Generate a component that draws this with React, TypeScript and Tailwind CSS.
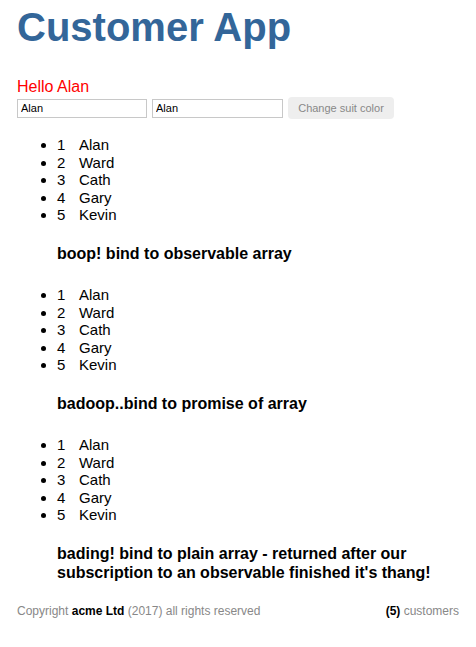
import React from "react";

const customers = [
  { id: 1, name: "Alan" },
  { id: 2, name: "Ward" },
  { id: 3, name: "Cath" },
  { id: 4, name: "Gary" },
  { id: 5, name: "Kevin" },
];

function CustomerList() {
  return (
    <ul className="list-disc pl-[40px] text-[15px] leading-[17.5px] text-black">
      {customers.map((c) => (
        <li key={c.id}>
          <span className="inline-block w-[22px]">{c.id}</span>
          {c.name}
        </li>
      ))}
    </ul>
  );
}

function Heading({ children }: { children: React.ReactNode }) {
  return (
    <h4 className="ml-[40px] mt-[21.5px] mb-[22.6px] text-[16px] leading-[18.4px] font-bold text-black">
      {children}
    </h4>
  );
}

export default function App() {
  return (
    <div
      className="min-h-[647px] bg-white px-[17px] text-black"
      style={{ fontFamily: '"Liberation Sans", Arial, sans-serif' }}
    >
      <h1 className="pt-[4px] text-[40px] leading-[46px] font-bold text-[#336699]">
        Customer App
      </h1>
      <div className="mt-[28px] text-[16px] leading-[18.4px] text-[#ff0000]">Hello Alan</div>
      <div className="flex items-center h-[22px] mt-[1px]">
        <input
          className="w-[130px] h-[19px] border border-[#c8c8c8] px-[3px] text-[11px] text-black outline-none"
          defaultValue="Alan"
        />
        <input
          className="ml-[5px] w-[131px] h-[19px] border border-[#c8c8c8] px-[3px] text-[11px] text-black outline-none"
          defaultValue="Alan"
        />
        <button className="ml-[5px] h-[22px] w-[106px] rounded-[4px] bg-[#eeeeee] text-[11px] text-[#888888]">
          Change suit color
        </button>
      </div>
      <div className="mt-[17px]">
        <CustomerList />
        <Heading>boop! bind to observable array</Heading>
        <CustomerList />
        <Heading>badoop..bind to promise of array</Heading>
        <CustomerList />
        <Heading>
          bading! bind to plain array - returned after our subscription to an observable finished it's thang!
        </Heading>
      </div>
      <div className="flex justify-between text-[12px] leading-[14px] text-[#888888] -mt-[1px]">
        <div>
          Copyright <span className="font-bold text-black">acme Ltd</span> (2017) all rights reserved
        </div>
        <div>
          <span className="font-bold text-black">(5)</span> customers
        </div>
      </div>
    </div>
  );
}
